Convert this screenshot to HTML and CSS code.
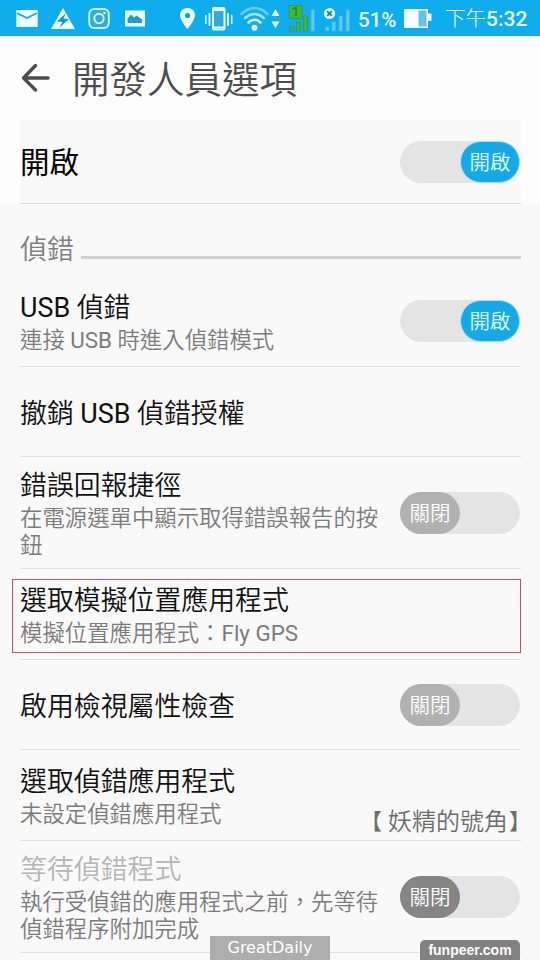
FILE: index.html
```
<!DOCTYPE html>
<html lang="zh-Hant">
<head>
<meta charset="utf-8">
<title>開發人員選項</title>
<link rel="stylesheet" href="styles.css">
</head>
<body>
<div class="screen">
  <header class="status">
    <svg class="status-icons" width="356" height="36" viewBox="0 0 356 36">
      <g fill="#eaffff">
        <rect x="16.300" y="10" width="21.400" height="17"/>
        <path d="M51 29 63 8l12 21z"/>
        <rect x="125" y="10.500" width="20" height="16"/>
        <path d="M187.500 8c-4.500 0-7.500 3.200-7.500 7.300 0 5 7.500 13.700 7.500 13.700s7.500-8.700 7.500-13.700c0-4.100-3-7.300-7.500-7.300z"/>
        <circle cx="254.500" cy="27.700" r="3"/>
        <path d="m275.500 9 4 7h-8zM275.500 28l4-6.500h-8z"/>
      </g>
      <path d="m17 13 10 5 10-5" fill="none" stroke="#2aa2d2" stroke-width="1.800"/>
      <path d="m66 13-9 8.500 5.500.500-3 5.500 9.500-8.500-5.500-.5z" fill="#1595c8"/>
      <g fill="none" stroke="#c9f8fb" stroke-width="2">
        <rect x="89.200" y="9" width="19.600" height="19" rx="5" fill="#35a9dc"/>
        <circle cx="99" cy="18.500" r="4.700"/>
      </g>
      <circle cx="104.500" cy="13" r="1.300" fill="#dfffff"/>
      <path d="M127.500 23v-4.500l3.500-4 3 3 2.500-2 5.500 4V23z" fill="#2499ca"/>
      <circle cx="187.500" cy="15.500" r="2.600" fill="#14a1dc"/>
      <g fill="none" stroke="#e4ffff" stroke-width="2">
        <rect x="213" y="8" width="11.500" height="21.500" rx="1" fill="#35a9dc"/>
        <path d="M213 10h11.500M213 27.500h11.500"/>
        <path d="M209.500 13v13M228 13v13" stroke-width="1.800"/>
        <path d="M205.800 15v9M231.700 15v9" stroke-width="1.500"/>
      </g>
      <g fill="none" stroke-width="2.400" stroke-linecap="round">
        <path d="M248.500 22.500q6-5.500 12 0" stroke="#eaffff"/>
        <path d="M245 18q9.500-8 19 0" stroke="#9ce5fa"/>
        <path d="M241.500 14q13-12 26 0" stroke="#68cff5"/>
      </g>
      <g fill="#40b82f" stroke="#33934c" stroke-width=".7">
        <rect x="289" y="5.500" width="13" height="13"/>
        <rect x="289.500" y="27" width="4" height="4"/>
        <rect x="296.500" y="22.500" width="4" height="8.500"/>
        <rect x="303.500" y="16" width="4" height="15"/>
      </g>
      <path d="m292.500 9 3.500-1.500V16" fill="none" stroke="#257c3c" stroke-width="1.400"/>
      <g fill="#60c9f5" stroke="#3cafe0" stroke-width=".7">
        <rect x="311" y="10" width="3.700" height="21"/>
        <rect x="325.300" y="27" width="3.700" height="4"/>
        <rect x="332" y="22" width="3.700" height="9"/>
        <rect x="339" y="16" width="3.700" height="15"/>
        <rect x="346" y="10" width="3.700" height="21"/>
      </g>
      <circle cx="329.500" cy="13.500" r="5.600" fill="#e5ffff"/>
      <path d="m327.200 11.200 4.600 4.600m0-4.600-4.600 4.600" stroke="#187faa" stroke-width="1.900"/>
    </svg>
    <span class="percent">51%</span>
    <svg class="battery" width="30" height="20" viewBox="0 0 30 20">
      <path d="M1 1h24v4.500h3.500v7.500H25v7H1z" fill="#f2ffff"/>
      <path d="M15.500 2.500h8v16h-8z" fill="#68c2e8"/>
    </svg>
    <span class="clock">下午<b>5:32</b></span>
  </header>
  <div class="titlebar">
    <svg width="30" height="30" viewBox="0 0 30 30" fill="none" stroke="#4d4d4d" stroke-width="3.400" stroke-linecap="round" stroke-linejoin="round">
      <path d="M14.500 2.500 2.500 15l12 12M2.500 15H27"/>
    </svg>
    <h1>開發人員選項</h1>
  </div>
  <div class="master">
    <div class="master-row">
      <span class="master-label">開啟</span>
      <div class="toggle on"><span>開啟</span></div>
    </div>
  </div>
  <main class="list">
    <div class="section"><span>偵錯</span><i></i></div>
    <div class="row">
      <div class="copy"><h2><span class="latin">USB</span> 偵錯</h2><p>連接 <span class="latin">USB</span> 時進入偵錯模式</p></div>
      <div class="toggle on"><span>開啟</span></div>
    </div>
    <div class="row single">
      <div class="copy"><h2>撤銷 <span class="latin">USB</span> 偵錯授權</h2></div>
    </div>
    <div class="row tall">
      <div class="copy"><h2>錯誤回報捷徑</h2><p>在電源選單中顯示取得錯誤報告的按<br>鈕</p></div>
      <div class="toggle"><span>關閉</span></div>
    </div>
    <div class="row marked">
      <div class="copy"><h2>選取模擬位置應用程式</h2><p>模擬位置應用程式：<span class="latin">Fly GPS</span></p></div>
    </div>
    <div class="row single">
      <div class="copy"><h2>啟用檢視屬性檢查</h2></div>
      <div class="toggle"><span>關閉</span></div>
    </div>
    <div class="row">
      <div class="copy"><h2>選取偵錯應用程式</h2><p>未設定偵錯應用程式</p></div>
    </div>
    <div class="row tall disabled">
      <div class="copy"><h2>等待偵錯程式</h2><p>執行受偵錯的應用程式之前，先等待<br>偵錯程序附加完成</p></div>
      <div class="toggle"><span>關閉</span></div>
    </div>
  </main>
  <div class="credit"><span>【</span><span>妖精的號角</span><span>】</span></div>
  <div class="daily">GreatDaily</div>
  <div class="source">funpeer.com</div>
</div>
</body>
</html>
```
FILE: styles.css
```
* { box-sizing: border-box; }
body {
  margin: 0;
  font-family: Roboto, "Noto Sans CJK TC", sans-serif;
  font-weight: 350;
  background: #f9f9f9;
}
.screen {
  position: relative;
  width: 540px;
  height: 960px;
  overflow: hidden;
  background: #f9f9f9;
}
h1, h2, p { margin: 0; font-weight: 350; }
.latin { font-weight: 400; }
.status {
  display: flex;
  align-items: center;
  height: 36px;
  background: #10adec;
  color: #e2ffff;
  white-space: nowrap;
}
.status-icons { flex: none; }
.percent {
  width: 47px;
  padding: 3px 0 0 2px;
  font-size: 20.5px;
  font-weight: 500;
}
.battery { flex: none; }
.clock {
  margin-left: 12px;
  padding-top: 3px;
  font-size: 20.5px;
  line-height: 33px;
  font-weight: 300;
}
.clock b { font-weight: 500; font-size: 21px; }
.titlebar {
  display: flex;
  align-items: center;
  height: 84px;
  padding-left: 21px;
  background: #fdfdfd;
}
.titlebar h1 {
  margin-left: 21px;
  padding-top: 4px;
  color: #4d4d4d;
  font-size: 37.5px;
  line-height: 50px;
}
.master {
  height: 84px;
  padding: 0 19px 0 20px;
  background: #fdfdfd;
}
.master-row {
  display: flex;
  align-items: center;
  justify-content: space-between;
  height: 84px;
  border-bottom: 1px solid #dcdcdc;
  background: #f9f9f9;
}
.master-label {
  padding-bottom: 3px;
  color: #000;
  font-size: 29.5px;
  font-weight: 400;
}
.list { padding: 0 19px 0 20px; }
.section {
  display: flex;
  height: 72px;
  padding-top: 24px;
  color: #808080;
  font-size: 27px;
  line-height: 44px;
}
.section i {
  flex: 1;
  height: 3px;
  margin: 28px 0 0 7px;
  background: #d2d2d6;
}
.row {
  display: flex;
  align-items: center;
  justify-content: space-between;
  height: 91px;
  border-bottom: 1px solid #e0e0e0;
  white-space: nowrap;
}
.row.tall { height: 112px; }
.row.single { height: 90px; }
.row.marked { position: relative; height: 91px; }
.row.marked::after {
  content: "";
  position: absolute;
  inset: 10px 0 6px -8px;
  border: 1px solid #c5505e;
}
.copy h2 {
  margin-bottom: 1px;
  padding-top: 1px;
  color: #111;
  font-size: 26.9px;
  line-height: 36px;
}
.row.single h2 { margin-bottom: 0; padding-top: 4px; }
.copy p {
  color: #7c7c7c;
  font-size: 22.4px;
  line-height: 27px;
}
.disabled .copy h2 { color: #b6b6b6; }
.toggle {
  flex: none;
  width: 120px;
  height: 42px;
  margin-right: 1px;
  border-radius: 21px;
  background: #e4e4e4;
}
.toggle span {
  display: block;
  width: 60px;
  height: 42px;
  border-radius: 21px;
  background: #b1b1b1;
  color: #fff;
  font-size: 20.5px;
  line-height: 44px;
  text-align: center;
}
.toggle.on span {
  margin-left: auto;
  border: 1px solid #9fe6f8;
  background: #16a9e6;
  color: #dfffff;
  line-height: 42px;
}
.disabled .toggle span { background: #858585; }
.credit {
  position: absolute;
  display: flex;
  right: 9px;
  top: 805px;
  color: #6c6c6c;
  font-size: 24px;
  line-height: 34px;
}
.credit span:first-child { margin-right: 6px; font-size: 22px; }
.credit span:last-child { margin-left: 1px; font-size: 22px; }
.daily {
  position: absolute;
  left: 210px;
  top: 936px;
  width: 120px;
  height: 24px;
  background: #adadad;
  color: #fff;
  font: 16px/24px "DejaVu Sans", sans-serif;
  text-align: center;
}
.source {
  position: absolute;
  left: 420px;
  top: 940px;
  width: 100px;
  height: 20px;
  border-radius: 5px 5px 0 0;
  background: #818181;
  color: #fff;
  font: bold 14px/21px "Liberation Sans", sans-serif;
  text-align: center;
}
```
